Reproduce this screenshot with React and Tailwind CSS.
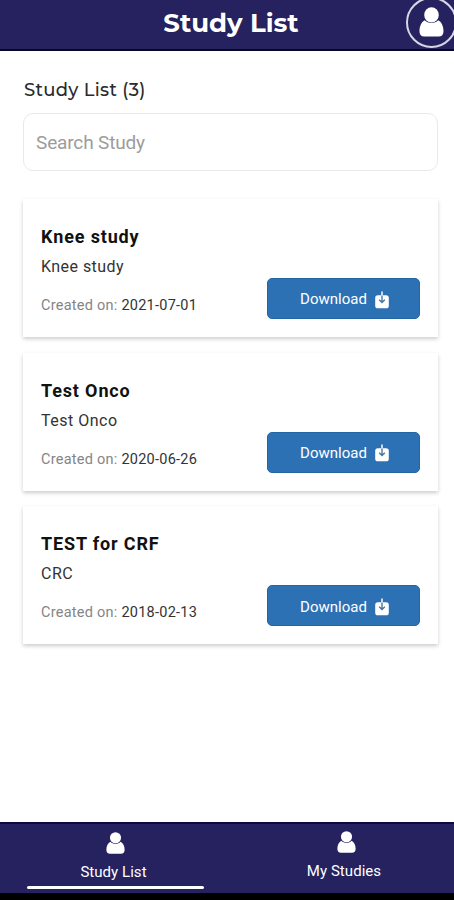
import React from "react";

const studies = [
  { title: "Knee study", subtitle: "Knee study", date: "2021-07-01", titleStyle: "tracking-[0.85px]", subStyle: "tracking-[0.45px]" },
  { title: "Test Onco", subtitle: "Test Onco", date: "2020-06-26", titleStyle: "tracking-[0.85px]", subStyle: "tracking-[0.5px]" },
  { title: "TEST for CRF", subtitle: "CRC", date: "2018-02-13", titleStyle: "tracking-[0.85px]", subStyle: "tracking-[0.5px]" },
];

function Person({ className }) {
  return (
    <svg viewBox="0 0 26 30" className={className} preserveAspectRatio="none">
      <path
        d="M6 13.2C2.8 14.7 0.5 19 0.5 24.2C0.5 27.7 2.3 29.5 5.5 29.5H20.5C23.7 29.5 25.5 27.7 25.5 24.2C25.5 19 23.2 14.7 20 13.2C18.1 15 16 16 13 16C10 16 7.9 15 6 13.2Z"
        fill="white"
      />
      <circle cx="13" cy="7.9" r="7.6" fill="white" />
    </svg>
  );
}

function DownloadIcon() {
  return (
    <svg viewBox="0 0 14 18" className="h-[18px] w-[14px] shrink-0">
      <rect x="0.2" y="4.3" width="13.6" height="13" rx="2.6" fill="white" />
      <path d="M7 0.5V5" stroke="white" strokeWidth="1.5" />
      <path d="M7 4.5V11.5M4.2 8.8L7 11.6L9.8 8.8" stroke="#49769f" strokeWidth="1.4" fill="none" />
    </svg>
  );
}

function StudyCard({ study }) {
  return (
    <article className="flex h-[138px] justify-between bg-white pr-[18px] pl-[18px] shadow-[0_2px_4px_rgba(0,0,0,0.2)]">
      <div className="flex flex-col pt-[26px] whitespace-nowrap">
        <h2 className={"text-[18px] leading-[24px] font-bold text-[#111] " + study.titleStyle}>{study.title}</h2>
        <p className={"mt-[7px] text-[16px] leading-[22px] text-[#333] " + study.subStyle}>{study.subtitle}</p>
        <p className="mt-[18px] text-[14.5px] leading-[20px] tracking-[0.25px] text-[#858585]">
          Created on: <span className="text-[#333]">{study.date}</span>
        </p>
      </div>
      <button className="mt-[79px] flex h-[41px] w-[153px] items-center justify-center gap-[8px] rounded-[5px] border border-[#2466a3] bg-[#2d71b5] pt-[2px] pl-[2px] text-[15px] text-white">
        Download
        <DownloadIcon />
      </button>
    </article>
  );
}

export default function App() {
  return (
    <div className="flex h-[900px] w-[454px] flex-col overflow-hidden bg-white font-['Roboto',sans-serif]">
      <header className="flex h-[51px] shrink-0 border-b-2 border-[#080622] bg-[#25225f]">
        <div className="w-[56px] shrink-0" />
        <h1 className="flex-1 pt-[7px] text-center font-['Montserrat','Open_Sans',sans-serif] text-[26px] leading-[32px] font-bold whitespace-nowrap text-white">
          Study List
        </h1>
        <div className="-mt-[3px] -mr-[3px] flex size-[51px] shrink-0 items-center justify-center rounded-full border-2 border-[#d7d6e5]">
          <Person className="mt-[-2px] h-[30px] w-[25px]" />
        </div>
      </header>

      <main className="flex min-h-0 flex-1 flex-col pr-[16px] pl-[23px]">
        <p className="mt-[26px] h-[26px] pl-px font-['Montserrat','Open_Sans',sans-serif] text-[18px] leading-[26px] font-medium tracking-[0.3px] whitespace-nowrap text-[#2a2a2a]">
          Study List (3)
        </p>
        <input
          className="mt-[10px] h-[58px] w-full shrink-0 rounded-[10px] border border-[#e9e9e9] px-[12px] text-[19px] tracking-[-0.15px] placeholder:text-[#9c9c9c]"
          placeholder="Search Study"
        />
        <section className="mt-[28px] flex flex-col gap-[15.7px]">
          {studies.map((study) => (
            <StudyCard key={study.title} study={study} />
          ))}
        </section>
      </main>

      <nav className="flex h-[78px] shrink-0 border-t-2 border-[#0e0b42] bg-[#25225f] border-b-[7px] border-b-black whitespace-nowrap text-white">
        <div className="flex w-[227px] flex-col items-center pt-[8px]">
          <Person className="ml-[4px] h-[22px] w-[19px]" />
          <span className="mt-[8px] text-[15px] leading-[20px] tracking-[0.05px]">Study List</span>
          <span className="mt-[4px] ml-[4px] h-[3px] w-[177px] rounded-full bg-white" />
        </div>
        <div className="flex w-[227px] flex-col items-center pt-[7px] pl-[7px]">
          <Person className="ml-[4px] h-[22px] w-[19px]" />
          <span className="mt-[8px] text-[15px] leading-[20px] tracking-[0.05px]">My Studies</span>
        </div>
      </nav>
    </div>
  );
}
